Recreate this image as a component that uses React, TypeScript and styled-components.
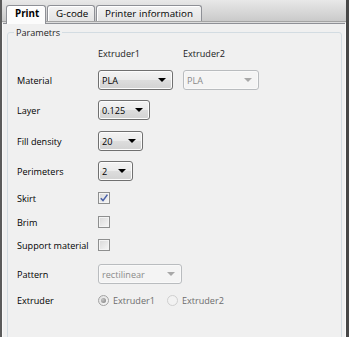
import styled, { createGlobalStyle } from 'styled-components';

const GlobalStyle = createGlobalStyle`
  html, body {
    margin: 0;
    padding: 0;
    background: #f0f0f0;
  }
  body {
    font-family: "Open Sans", "Liberation Sans", sans-serif;
    font-size: 9.1px;
    color: #000;
  }
`;

const Window = styled.div`
  width: 349px;
  height: 337px;
  box-sizing: border-box;
  border-left: 2px solid #5b5b5b;
  border-right: 3px solid #474747;
  display: flex;
  flex-direction: column;
  overflow: hidden;
  background: #f0f0f0;
`;

const TabStrip = styled.div`
  height: 21px;
  flex: none;
  display: flex;
  align-items: flex-end;
  gap: 1px;
  padding-left: 4px;
  background: linear-gradient(#e8e8e8, #cacaca);
  border-bottom: 1px solid #a4a4a4;
  position: relative;
  z-index: 1;
`;

const Tab = styled.div<{ $active?: boolean; $w: number }>`
  box-sizing: border-box;
  width: ${(p) => p.$w}px;
  height: ${(p) => (p.$active ? 19 : 16)}px;
  margin-bottom: ${(p) => (p.$active ? -3 : 0)}px;
  padding-left: 8px;
  line-height: ${(p) => (p.$active ? 16 : 15)}px;
  border: 1px solid #8e9096;
  border-bottom: none;
  border-radius: 3px 3px 0 0;
  background: ${(p) => (p.$active ? '#fcfcfc' : 'linear-gradient(#f3f3f3, #e3e3e3)')};
  box-shadow: inset 1px 1px 0 #fff;
  font-weight: ${(p) => (p.$active ? 700 : 400)};
  font-size: 9.8px;
  white-space: nowrap;
`;

const Panel = styled.div`
  flex: 1;
  min-height: 0;
  border-top: 1px solid #dcdcdc;
  box-shadow: inset 0 1px 0 #8e9096;
  border-left: 1px solid #fafafa;
  border-right: 1px solid #fafafa;
  background: #f0f0f0;
  overflow: hidden;
`;

const Group = styled.fieldset`
  margin: 3px 3px 0 4px;
  padding: 0;
  min-width: 0;
  height: 400px;
  border: 1px solid #d3dce2;
  border-radius: 3px;
`;

const Legend = styled.legend`
  margin-left: 6px;
  padding: 0 2px;
  line-height: 13px;
  color: #1e1e1e;
`;

const Form = styled.div`
  padding: 4px 0 0 9px;
`;

const Row = styled.div<{ $gap: number }>`
  display: grid;
  grid-template-columns: 81px 85px auto;
  align-items: center;
  height: 20px;
  margin-top: ${(p) => p.$gap}px;
`;

const Label = styled.span`
  white-space: nowrap;
`;

const Header = styled.span`
  color: #1a1a1a;
  white-space: nowrap;
`;

const Combo = styled.div<{ $w: number; $disabled?: boolean }>`
  box-sizing: border-box;
  width: ${(p) => p.$w}px;
  height: 20px;
  display: flex;
  align-items: center;
  justify-content: space-between;
  padding: 0 6px 0 3px;
  border: 1px solid ${(p) => (p.$disabled ? '#b9bcbf' : '#707070')};
  border-radius: 3px;
  background: ${(p) =>
    p.$disabled
      ? '#f4f4f4'
      : 'linear-gradient(#f3f3f3 0%, #ebebeb 48%, #dddddd 52%, #d2d2d2 100%)'};
  box-shadow: inset 0 0 0 1px ${(p) => (p.$disabled ? '#f9f9f9' : '#fcfcfc')};
  color: ${(p) => (p.$disabled ? '#8a8a8a' : '#000')};
`;

const Arrow = styled.span<{ $disabled?: boolean }>`
  width: 0;
  height: 0;
  border-left: 4px solid transparent;
  border-right: 4px solid transparent;
  border-top: 4px solid ${(p) => (p.$disabled ? '#a8a8a8' : '#000')};
`;

const Box = styled.span`
  box-sizing: border-box;
  width: 12px;
  height: 12px;
  display: flex;
  align-items: center;
  justify-content: center;
  border: 1px solid #8e8f8f;
  background: linear-gradient(135deg, #d8d8d8, #f7f7f7);
  box-shadow: inset 0 0 0 1px #f4f4f4;
`;

const Radios = styled.div`
  grid-column: 2 / 4;
  display: flex;
  align-items: center;
  gap: 12px;
`;

const RadioItem = styled.span`
  display: flex;
  align-items: center;
  gap: 4px;
  color: #6d6d6d;
`;

const Circle = styled.span<{ $on?: boolean }>`
  box-sizing: border-box;
  width: 11px;
  height: 11px;
  border-radius: 50%;
  display: flex;
  align-items: center;
  justify-content: center;
  border: 1px solid ${(p) => (p.$on ? '#a3a3a3' : '#cfcfcf')};
  background: ${(p) => (p.$on ? 'linear-gradient(135deg, #e0e0e0, #f8f8f8)' : '#f2f2f2')};

  &::after {
    content: '';
    display: ${(p) => (p.$on ? 'block' : 'none')};
    width: 5px;
    height: 5px;
    border-radius: 50%;
    background: radial-gradient(circle at 35% 35%, #c4c4c4, #7e7e7e);
  }
`;

const ComboBox = ({ value, w, disabled }: { value: string; w: number; disabled?: boolean }) => (
  <Combo $w={w} $disabled={disabled}>
    <span>{value}</span>
    <Arrow $disabled={disabled} />
  </Combo>
);

const CheckBox = ({ checked }: { checked?: boolean }) => (
  <Box>
    {checked && (
      <svg width="10" height="10" viewBox="0 0 10 10">
        <path d="M1.8 5.2 L4 7.6 L8.4 1.6" fill="none" stroke="#4a61a8" strokeWidth="1.6" />
      </svg>
    )}
  </Box>
);

const App = () => {
  return (
    <>
      <GlobalStyle />
      <Window>
        <TabStrip>
          <Tab $active $w={40}>Print</Tab>
          <Tab $w={48}>G-code</Tab>
          <Tab $w={106}>Printer information</Tab>
        </TabStrip>
        <Panel>
          <Group>
            <Legend>Parametrs</Legend>
            <Form>
              <Row $gap={0}>
                <span />
                <Header>Extruder1</Header>
                <Header>Extruder2</Header>
              </Row>
              <Row $gap={7}>
                <Label>Material</Label>
                <ComboBox value="PLA" w={75} />
                <ComboBox value="PLA" w={76} disabled />
              </Row>
              <Row $gap={10}>
                <Label>Layer</Label>
                <ComboBox value="0.125" w={52} />
              </Row>
              <Row $gap={11}>
                <Label>Fill density</Label>
                <ComboBox value="20" w={45} />
              </Row>
              <Row $gap={10}>
                <Label>Perimeters</Label>
                <ComboBox value="2" w={35} />
              </Row>
              <Row $gap={7}>
                <Label>Skirt</Label>
                <CheckBox checked />
              </Row>
              <Row $gap={4}>
                <Label>Brim</Label>
                <CheckBox />
              </Row>
              <Row $gap={3}>
                <Label>Support material</Label>
                <CheckBox />
              </Row>
              <Row $gap={9}>
                <Label>Pattern</Label>
                <ComboBox value="rectilinear" w={84} disabled />
              </Row>
              <Row $gap={6}>
                <Label>Extruder</Label>
                <Radios>
                  <RadioItem>
                    <Circle $on />
                    Extruder1
                  </RadioItem>
                  <RadioItem>
                    <Circle />
                    Extruder2
                  </RadioItem>
                </Radios>
              </Row>
            </Form>
          </Group>
        </Panel>
      </Window>
    </>
  );
};

export default App;
